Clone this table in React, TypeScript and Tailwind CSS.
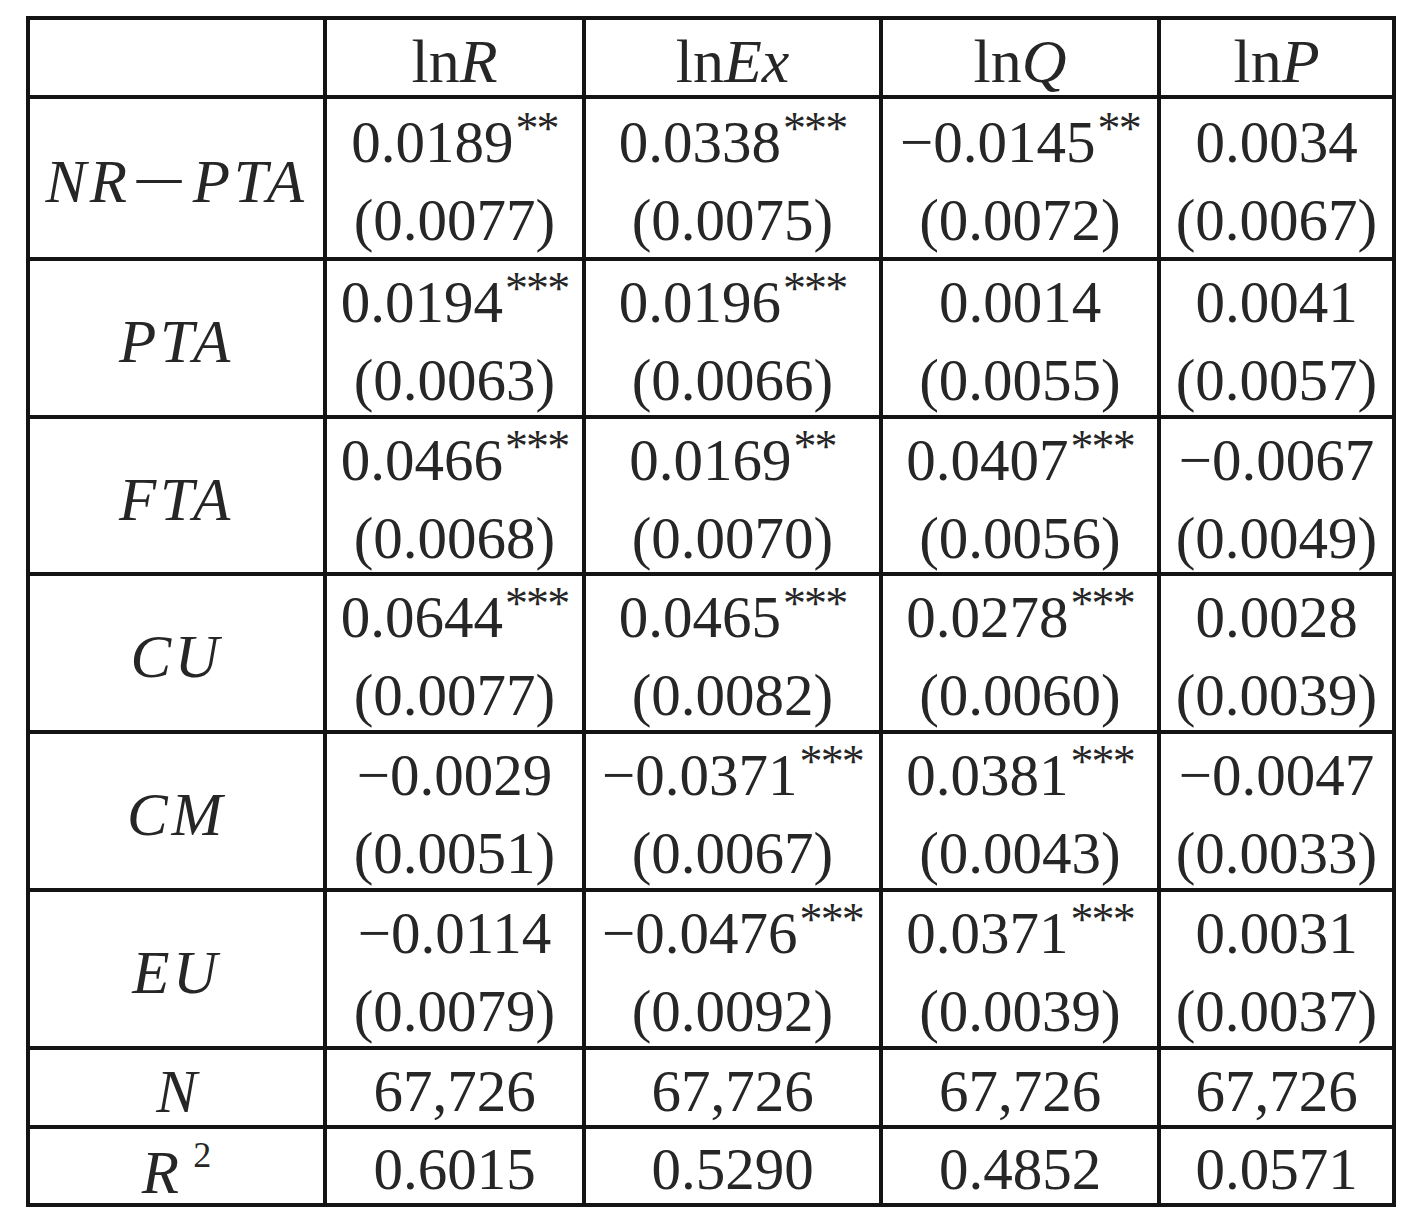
import React from "react";

type Cell = [string, string, string];

const rows: { label: React.ReactNode; cells: Cell[] }[] = [
  {
    label: (
      <>
        NR<span className="inline-block mx-[12px] not-italic scale-x-[1.6]">−</span>PTA
      </>
    ),
    cells: [
      ["0.0189", "**", "(0.0077)"],
      ["0.0338", "***", "(0.0075)"],
      ["−0.0145", "**", "(0.0072)"],
      ["0.0034", "", "(0.0067)"],
    ],
  },
  {
    label: "PTA",
    cells: [
      ["0.0194", "***", "(0.0063)"],
      ["0.0196", "***", "(0.0066)"],
      ["0.0014", "", "(0.0055)"],
      ["0.0041", "", "(0.0057)"],
    ],
  },
  {
    label: "FTA",
    cells: [
      ["0.0466", "***", "(0.0068)"],
      ["0.0169", "**", "(0.0070)"],
      ["0.0407", "***", "(0.0056)"],
      ["−0.0067", "", "(0.0049)"],
    ],
  },
  {
    label: "CU",
    cells: [
      ["0.0644", "***", "(0.0077)"],
      ["0.0465", "***", "(0.0082)"],
      ["0.0278", "***", "(0.0060)"],
      ["0.0028", "", "(0.0039)"],
    ],
  },
  {
    label: "CM",
    cells: [
      ["−0.0029", "", "(0.0051)"],
      ["−0.0371", "***", "(0.0067)"],
      ["0.0381", "***", "(0.0043)"],
      ["−0.0047", "", "(0.0033)"],
    ],
  },
  {
    label: "EU",
    cells: [
      ["−0.0114", "", "(0.0079)"],
      ["−0.0476", "***", "(0.0092)"],
      ["0.0371", "***", "(0.0039)"],
      ["0.0031", "", "(0.0037)"],
    ],
  },
];

const heads = ["R", "Ex", "Q", "P"];
const nValues = ["67,726", "67,726", "67,726", "67,726"];
const r2Values = ["0.6015", "0.5290", "0.4852", "0.0571"];

const cellBase = "bg-white flex items-center justify-center pt-[7px]";

const Stars: React.FC<{ s: string }> = ({ s }) =>
  s ? <span className="text-[46px] leading-none align-[18px] ml-[2px] tracking-[-0.04em]">{s}</span> : null;

const App: React.FC = () => {
  return (
    <div className="min-h-screen bg-white pt-[16px] pl-[26px] text-[#262626]" style={{ fontFamily: '"Liberation Serif", "Times New Roman", serif' }}>
      <div className="inline-grid bg-[#141414] p-[4px] gap-[4px] grid-cols-[293px_255px_293px_274px_231px] grid-rows-[75px_158px_154px_153px_154px_154px_154px_75px_74px]">
        {/* header */}
        <div className="bg-white" />
        {heads.map(h => (
          <div key={h} className={`${cellBase} text-[62px] leading-none`}>
            <span>
              ln<span className="italic">{h}</span>
            </span>
          </div>
        ))}

        {rows.map((row, i) => (
          <React.Fragment key={i}>
            <div className={`${cellBase} text-[61px] leading-none italic tracking-[0.06em]`}>
              <span>{row.label}</span>
            </div>
            {row.cells.map(([coef, stars, se], j) => (
              <div key={j} className="bg-white flex flex-col items-center justify-center pt-[6px] text-[59px] leading-[78px]">
                <div className="h-[78px] whitespace-nowrap">
                  {coef}
                  <Stars s={stars} />
                </div>
                <div className="h-[78px] whitespace-nowrap">{se}</div>
              </div>
            ))}
          </React.Fragment>
        ))}

        <div className={`${cellBase} text-[61px] leading-none italic`}>
          <span>N</span>
        </div>
        {nValues.map((v, j) => (
          <div key={j} className={`${cellBase} text-[59px] leading-none`}>{v}</div>
        ))}

        <div className={`${cellBase} text-[61px] leading-none`}>
          <span>
            <span className="italic">R</span>
            <span className="text-[36px] leading-none align-[26px] ml-[14px]">2</span>
          </span>
        </div>
        {r2Values.map((v, j) => (
          <div key={j} className={`${cellBase} text-[59px] leading-none`}>{v}</div>
        ))}
      </div>
    </div>
  );
};

export default App;
